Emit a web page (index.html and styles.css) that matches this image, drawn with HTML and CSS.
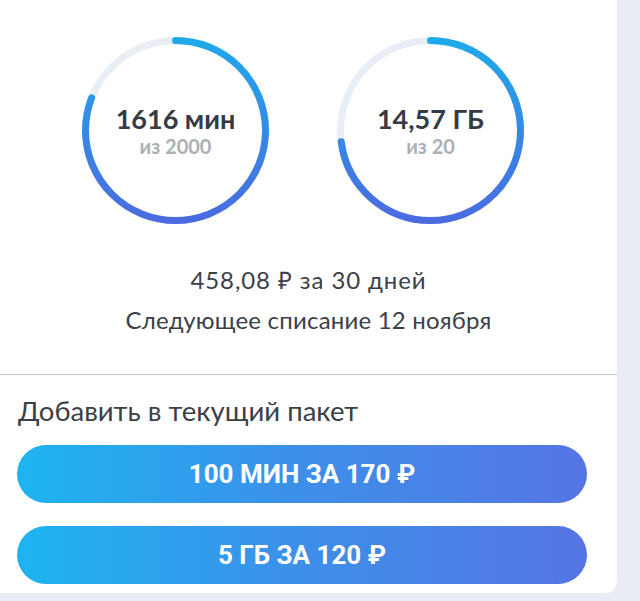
FILE: index.html
```html
<!DOCTYPE html>
<html lang="ru">
<head>
<meta charset="utf-8">
<title>Пакет</title>
<link rel="stylesheet" href="styles.css">
</head>
<body>
<div class="card">
  <section class="usage">
    <div class="rings">
      <div class="ring">
        <svg class="ring-svg" viewBox="0 0 187 187" width="187" height="187">
          <defs>
            <linearGradient id="g1" gradientUnits="userSpaceOnUse" x1="187" y1="0" x2="0" y2="0">
              <stop offset="0" stop-color="#1eaaea"/>
              <stop offset="1" stop-color="#4b6ae0"/>
            </linearGradient>
          </defs>
          <circle class="track" cx="93.5" cy="93.5" r="90"/>
          <circle class="arc" cx="93.5" cy="93.5" r="90" stroke="url(#g1)" stroke-dasharray="456.9 565.5" transform="rotate(-90 93.5 93.5)"/>
        </svg>
        <div class="ring-text">
          <div class="ring-value">1616 мин</div>
          <div class="ring-total">из 2000</div>
        </div>
      </div>
      <div class="ring">
        <svg class="ring-svg" viewBox="0 0 187 187" width="187" height="187">
          <defs>
            <linearGradient id="g2" gradientUnits="userSpaceOnUse" x1="187" y1="0" x2="0" y2="0">
              <stop offset="0" stop-color="#1eaaea"/>
              <stop offset="1" stop-color="#4b6ae0"/>
            </linearGradient>
          </defs>
          <circle class="track" cx="93.5" cy="93.5" r="90"/>
          <circle class="arc" cx="93.5" cy="93.5" r="90" stroke="url(#g2)" stroke-dasharray="412 565.5" transform="rotate(-90 93.5 93.5)"/>
        </svg>
        <div class="ring-text">
          <div class="ring-value">14,57 ГБ</div>
          <div class="ring-total">из 20</div>
        </div>
      </div>
    </div>
    <div class="billing">
      <div class="billing-line billing-price">458,08 ₽ за 30 дней</div>
      <div class="billing-line billing-next">Следующее списание 12 ноября</div>
    </div>
  </section>
  <section class="addons">
    <div class="addons-title">Добавить в текущий пакет</div>
    <button class="addon-btn">100 МИН ЗА 170 ₽</button>
    <button class="addon-btn">5 ГБ ЗА 120 ₽</button>
  </section>
</div>
</body>
</html>
```
FILE: styles.css
```css
html, body {
  margin: 0;
  padding: 0;
}
body {
  background: #e9ecf4;
  font-family: "Lato", "Open Sans", sans-serif;
  color: #3b4048;
  width: 640px;
  height: 601px;
  overflow: hidden;
}
.card {
  width: 617px;
  background: #ffffff;
  border-bottom-right-radius: 12px;
  padding-bottom: 9px;
}
.usage {
  padding-top: 37px;
  padding-bottom: 34px;
  border-bottom: 1px solid #bfc8cf;
}
.rings {
  display: flex;
  gap: 68px;
  padding-left: 82px;
}
.ring {
  position: relative;
  width: 187px;
  height: 187px;
}
.ring-svg {
  display: block;
}
.track {
  fill: none;
  stroke: #e8eef5;
  stroke-width: 7;
}
.arc {
  fill: none;
  stroke-width: 7;
  stroke-linecap: round;
}
.ring-text {
  position: absolute;
  inset: 0;
  display: flex;
  flex-direction: column;
  align-items: center;
  justify-content: center;
  padding-bottom: 2px;
}
.ring-value {
  font-weight: 700;
  font-size: 27px;
  line-height: 32px;
  color: #353a44;
}
.ring-total {
  font-weight: 700;
  font-size: 20px;
  line-height: 22px;
  color: #aab0b6;
}
.billing {
  margin-top: 36px;
  text-align: center;
}
.billing-line {
  font-size: 24px;
  line-height: 40px;
}
.billing-price {
  letter-spacing: 0.9px;
}
.billing-next {
  letter-spacing: 0.2px;
}
.addons {
  padding: 21px 30px 0 17px;
  display: flex;
  flex-direction: column;
}
.addons-title {
  font-size: 27.5px;
  line-height: 30px;
  padding-left: 1px;
  margin-bottom: 19px;
}
.addon-btn {
  height: 58px;
  width: 570px;
  border: none;
  border-radius: 29px;
  background: linear-gradient(90deg, #1db4f1 0%, #3d8fe9 50%, #5574e3 100%);
  color: #ffffff;
  font-family: "Roboto", "Open Sans", sans-serif;
  font-weight: 700;
  font-size: 26px;
  padding: 0;
}
.addon-btn + .addon-btn {
  margin-top: 23px;
}
```
